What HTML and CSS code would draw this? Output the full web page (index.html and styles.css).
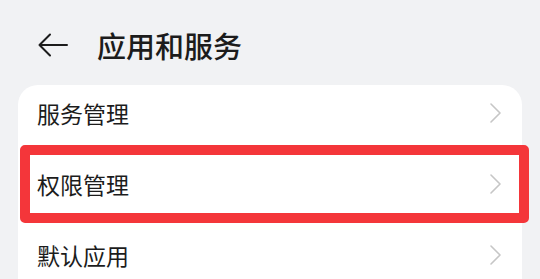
FILE: index.html
```html
<!DOCTYPE html>
<html lang="zh-CN">
<head>
    <meta charset="UTF-8">
    <meta name="viewport" content="width=device-width, initial-scale=1.0">
    <title>应用和服务</title>
    <link rel="stylesheet" href="styles.css">
</head>
<body>

<div class="header">
    <svg class="back" width="30" height="24" viewBox="0 0 30 24">
        <path d="M12 1.5 L1.5 12 L12 22.5 M1.5 12 L29 12" fill="none" stroke="#1c1c1c" stroke-width="2" stroke-linecap="round" stroke-linejoin="round"/>
    </svg>
    <h1>应用和服务</h1>
</div>

<div class="card">
    <div class="row">
        <span>服务管理</span>
        <svg class="chevron" width="11" height="20" viewBox="0 0 11 20">
            <path d="M1 1 L10 10 L1 19" fill="none" stroke="#c6c6c6" stroke-width="1.6" stroke-linecap="round" stroke-linejoin="round"/>
        </svg>
    </div>
    <div class="row">
        <span>权限管理</span>
        <svg class="chevron" width="11" height="20" viewBox="0 0 11 20">
            <path d="M1 1 L10 10 L1 19" fill="none" stroke="#c6c6c6" stroke-width="1.6" stroke-linecap="round" stroke-linejoin="round"/>
        </svg>
    </div>
    <div class="row">
        <span>默认应用</span>
        <svg class="chevron" width="11" height="20" viewBox="0 0 11 20">
            <path d="M1 1 L10 10 L1 19" fill="none" stroke="#c6c6c6" stroke-width="1.6" stroke-linecap="round" stroke-linejoin="round"/>
        </svg>
    </div>

    <!-- highlight drawn over the second row -->
    <div class="highlight"></div>
</div>

</body>
</html>
```

FILE: styles.css
```css
body {
    margin: 0;
    background-color: #f1f2f4;
    font-family: "Noto Sans CJK SC", "Noto Sans", sans-serif;
    color: #1c1c1c;
    overflow: hidden;
}
.header {
    height: 81px;
    padding-top: 4px;
    padding-left: 38px;
    display: flex;
    align-items: center;
}
.header h1 {
    margin: 0 0 0 29px;
    font-size: 29px;
    font-weight: 500;
    line-height: 32px;
}
.card {
    position: relative;
    margin: 0 18px;
    background-color: white;
    border-radius: 20px 20px 0 0;
    height: 194px;
}
.row {
    display: flex;
    align-items: center;
    justify-content: space-between;
    padding: 14px 21px 29px 19px;
    height: 28px;
    font-size: 23px;
    line-height: 28px;
}
.row:last-of-type {
    padding-bottom: 0;
}
.chevron {
    display: block;
}
.highlight {
    position: absolute;
    left: 2px;
    top: 60px;
    width: 489px;
    height: 58px;
    border: 10px solid #f4363a;
    border-radius: 5px;
}
```
